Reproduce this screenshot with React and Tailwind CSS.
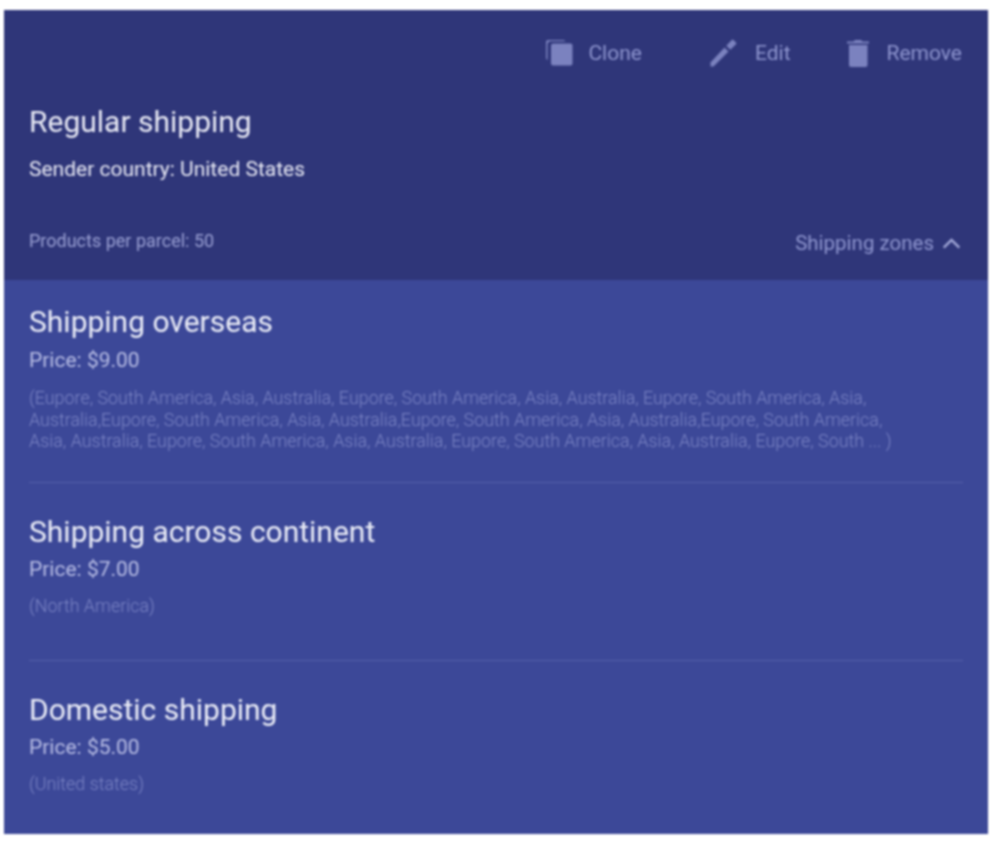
import React from "react";

const zones = [
  {
    name: "Shipping overseas",
    price: "Price: $9.00",
    desc: "(Eupore, South America, Asia, Australia, Eupore, South America, Asia, Australia, Eupore, South America, Asia, Australia,Eupore, South America, Asia, Australia,Eupore, South America, Asia, Australia,Eupore, South America, Asia, Australia, Eupore, South America, Asia, Australia, Eupore, South America, Asia, Australia, Eupore, South ... )",
    section: "border-b border-[#5560aa] h-[203px] pt-[24px]",
    priceGap: "mt-[7px]",
    descGap: "mt-[14px]",
  },
  {
    name: "Shipping across continent",
    price: "Price: $7.00",
    desc: "(North America)",
    section: "border-b border-[#5560aa] h-[178px] pt-[31px]",
    priceGap: "mt-[6px]",
    descGap: "mt-[13px]",
  },
  {
    name: "Domestic shipping",
    price: "Price: $5.00",
    desc: "(United states)",
    section: "pt-[31px]",
    priceGap: "mt-[6px]",
    descGap: "mt-[13px]",
  },
];

function CloneIcon() {
  return (
    <svg viewBox="0 0 28 26" className="w-[28px] h-[26px]" fill="#7b82bf">
      <path d="M3 0h15a3 3 0 0 1 2.500 1.300H6A3.500 3.500 0 0 0 2.500 4.800v15.500A3 3 0 0 1 1 18V2a2 2 0 0 1 2-2z" />
      <rect x="6" y="3.500" width="21.500" height="22" rx="2" />
    </svg>
  );
}
function EditIcon() {
  return (
    <svg viewBox="0 0 28 28" className="w-[28px] h-[28px]" fill="#7b82bf">
      <path d="M1.500 23.500V27.500H4.500L19.500 12.500L15.500 8.500Z" />
      <path d="M27 5.200a1.200 1.200 0 0 0 0-1.700L24.500 1a1.200 1.200 0 0 0-1.700 0L17.300 6.700l4 4z" />
    </svg>
  );
}
function TrashIcon() {
  return (
    <svg viewBox="0 0 22 28" className="w-[22px] h-[28px]" fill="#7b82bf">
      <path d="M2 6h18.500v20a2 2 0 0 1-2 2H4a2 2 0 0 1-2-2z" />
      <path d="M0 4.500V2.500h6.500L8 1h6l1.500 1.500H22v2z" />
    </svg>
  );
}

function Action({ icon, label, className }) {
  return (
    <div className={`flex items-center ${className}`}>
      {icon}
      <span className="text-[21px] leading-[26px] text-[#8f96cf]">{label}</span>
    </div>
  );
}

export default function App() {
  return (
    <div className="bg-white w-[998px] h-[846px] pt-[10px] pl-[4px]" style={{ fontFamily: "Roboto, sans-serif" }}>
      <div className="w-[984px] h-[824px] flex flex-col bg-[#3c4898] blur-[0.8px]">
        <header className="h-[270px] bg-[#2f3679] px-[25px] flex flex-col">
          <div className="flex justify-end items-center pt-[29px] pr-[1px]">
            <Action icon={<CloneIcon />} label="Clone" className="gap-[15px]" />
            <Action icon={<EditIcon />} label="Edit" className="gap-[18px] ml-[67px]" />
            <Action icon={<TrashIcon />} label="Remove" className="gap-[18px] ml-[56px]" />
          </div>
          <h1 className="mt-[37px] text-[30px] leading-[36px] text-[#e9eaf5] font-normal">Regular shipping</h1>
          <p className="mt-[16px] text-[21px] leading-[26px] text-[#e9eaf5]">Sender country: United States</p>
          <div className="mt-[47px] flex justify-between items-start">
            <span className="text-[18px] leading-[24px] text-[#9aa0d3]">Products per parcel: 50</span>
            <span className="mt-[1px] mr-[2px] flex items-center gap-[8px] text-[20.500px] leading-[26px] text-[#8f96cf]">
              Shipping zones
              <svg viewBox="0 0 20 12" className="w-[19px] h-[11px]" fill="none" stroke="#a2a8d8" strokeWidth="2.500">
                <path d="M1.500 10.500L10 2l8.500 8.500" />
              </svg>
            </span>
          </div>
        </header>
        <main className="px-[25px] flex flex-col">
          {zones.map((z) => (
            <section key={z.name} className={z.section}>
              <h2 className="text-[30px] leading-[36px] text-[#eceef8] font-normal">{z.name}</h2>
              <p className={`${z.priceGap} text-[21px] leading-[26px] text-[#b9bee5]`}>{z.price}</p>
              <p className={`${z.descGap} max-w-[880px] text-[17.900px] leading-[21.500px] text-[#7b84c4] font-light`}>{z.desc}</p>
            </section>
          ))}
        </main>
      </div>
    </div>
  );
}
